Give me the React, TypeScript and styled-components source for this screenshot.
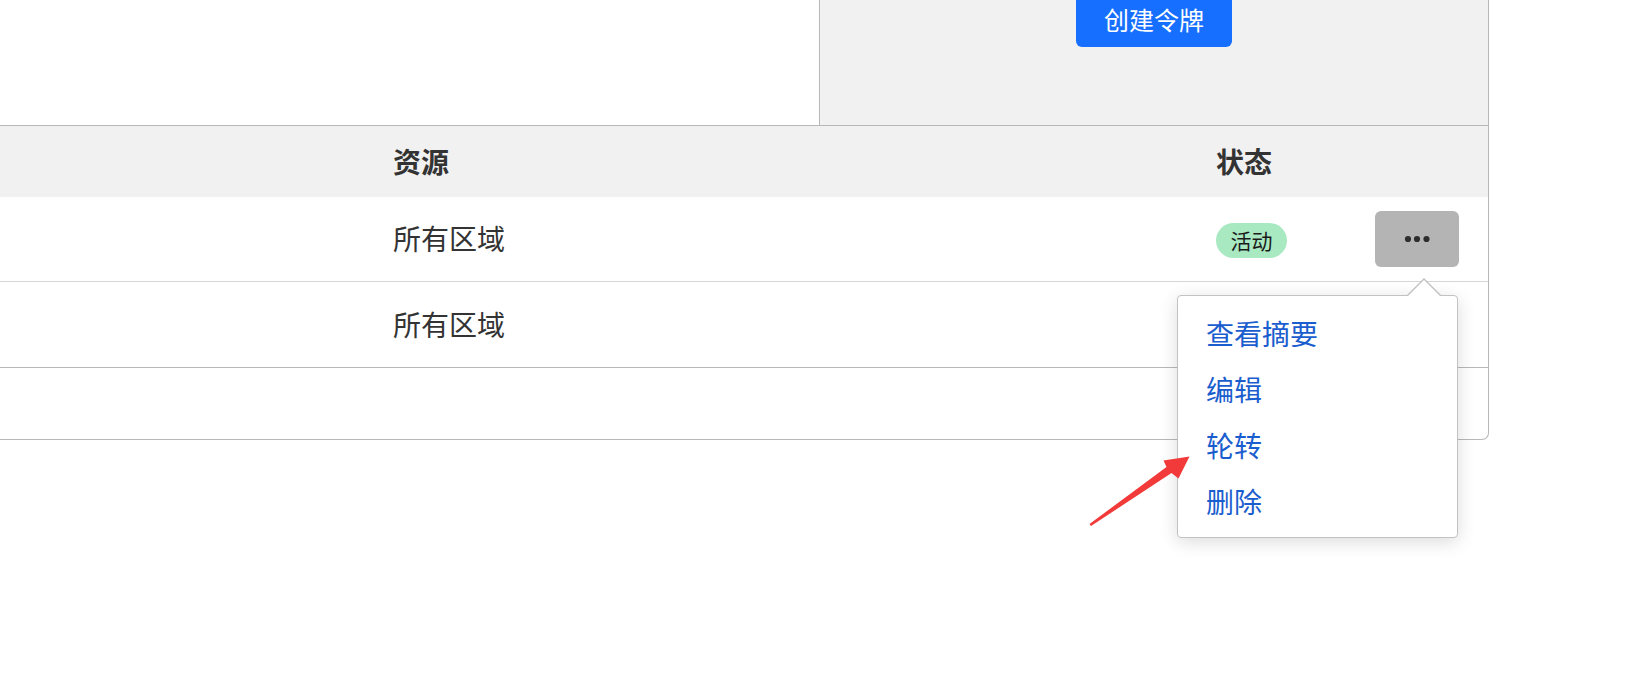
import * as React from 'react'
import styled, { createGlobalStyle } from 'styled-components'

const COLOR = {
  TEXT: '#333333',
  LINE: '#b8b8b8',
  LIGHT_LINE: '#d6d6d6',
  PANEL: '#f1f1f1',
  BLUE: '#166fff',
  LINK: '#1a5dce',
  BADGE: '#a9e9c2',
  MORE: '#b4b4b4',
}

const FONT = `'Noto Sans CJK SC', 'Noto Sans', sans-serif`

interface Token {
  id: number
  resource: string
  status?: string
}

const tokens: Token[] = [
  { id: 1, resource: '所有区域', status: '活动' },
  { id: 2, resource: '所有区域' },
]

const menuItems = ['查看摘要', '编辑', '轮转', '删除']

const App = () => {
  return (
    <Page>
      <GlobalStyle />
      <Card>
        <TopSection>
          <IntroPanel />
          <ActionPanel>
            <PrimaryButton>创建令牌</PrimaryButton>
          </ActionPanel>
        </TopSection>
        <HeaderRow>
          <Cell />
          <HeadCell>资源</HeadCell>
          <HeadCell>状态</HeadCell>
          <Cell />
        </HeaderRow>
        {tokens.map((token, index) => (
          <BodyRow key={token.id} isLast={index === tokens.length - 1}>
            <Cell />
            <Cell>{token.resource}</Cell>
            <Cell>{token.status && <Badge>{token.status}</Badge>}</Cell>
            <ActionCell>
              {index === 0 && (
                <>
                  <MoreButton>
                    <svg width="26" height="8" viewBox="0 0 26 8">
                      <circle cx="4" cy="4" r="3.1" fill="#2e2e2e" />
                      <circle cx="13" cy="4" r="3.1" fill="#2e2e2e" />
                      <circle cx="22.5" cy="4" r="3.1" fill="#2e2e2e" />
                    </svg>
                  </MoreButton>
                  <Menu>
                    {menuItems.map(item => (
                      <MenuItem key={item}>{item}</MenuItem>
                    ))}
                  </Menu>
                </>
              )}
            </ActionCell>
          </BodyRow>
        ))}
        <Footer />
      </Card>
      <Annotation width="1630" height="700" viewBox="0 0 1630 700">
        <polygon
          points="1089.5,524 1166.5,467 1163.5,460.5 1189.5,456.5 1178.5,478.5 1171.5,473 1091,526"
          fill="#f23a3a"
        />
      </Annotation>
    </Page>
  )
}

const GlobalStyle = createGlobalStyle`
  html, body {
    margin: 0;
    padding: 0;
    background: #ffffff;
  }
  body {
    font-family: ${FONT};
    color: ${COLOR.TEXT};
  }
`

const Page = styled.div`
  position: relative;
  width: 1630px;
  height: 700px;
  overflow: hidden;
`

const Card = styled.div`
  width: 1489px;
  box-sizing: border-box;
  border-right: 1px solid ${COLOR.LINE};
  border-bottom: 1px solid ${COLOR.LINE};
  border-bottom-right-radius: 7px;
`

const TopSection = styled.div`
  display: grid;
  grid-template-columns: 820px 1fr;
  height: 126px;
  box-sizing: border-box;
  border-bottom: 1px solid ${COLOR.LINE};
`

const IntroPanel = styled.div`
  background: #ffffff;
  border-right: 1px solid ${COLOR.LINE};
`

const ActionPanel = styled.div`
  background: ${COLOR.PANEL};
  display: flex;
  justify-content: center;
  align-items: flex-start;
`

const PrimaryButton = styled.button`
  margin-top: -8px;
  width: 156px;
  height: 55px;
  border: none;
  border-radius: 6px;
  background: ${COLOR.BLUE};
  color: #ffffff;
  font-family: ${FONT};
  font-size: 25px;
  line-height: 1;
  padding: 0;
`

const Row = styled.div`
  display: grid;
  grid-template-columns: 393px 823px 1fr auto;
  align-items: center;
  box-sizing: border-box;
`

const HeaderRow = styled(Row)`
  height: 71px;
  background: ${COLOR.PANEL};
`

const BodyRow = styled(Row)<{ isLast: boolean }>`
  height: ${props => (props.isLast ? 86 : 85)}px;
  border-bottom: 1px solid ${props => (props.isLast ? COLOR.LINE : COLOR.LIGHT_LINE)};
`

const Cell = styled.div`
  font-size: 28px;
  line-height: 1.2;
  color: ${COLOR.TEXT};
`

const HeadCell = styled(Cell)`
  font-weight: 700;
`

const ActionCell = styled.div`
  position: relative;
  padding-right: 29px;
  display: flex;
  justify-content: flex-end;
`

const Badge = styled.span`
  display: inline-flex;
  align-items: center;
  justify-content: center;
  width: 71px;
  height: 35px;
  border-radius: 18px;
  background: ${COLOR.BADGE};
  color: #1a1a1a;
  font-size: 21px;
  vertical-align: middle;
`

const MoreButton = styled.div`
  display: flex;
  align-items: center;
  justify-content: center;
  width: 84px;
  height: 56px;
  border-radius: 6px;
  background: ${COLOR.MORE};
`

const Menu = styled.div`
  position: absolute;
  top: 84px;
  right: 30px;
  width: 281px;
  box-sizing: border-box;
  padding: 9px 0 8px;
  background: #ffffff;
  border: 1px solid #c2c2c2;
  border-radius: 4px;
  box-shadow: 0 4px 18px rgba(0, 0, 0, 0.14);
  z-index: 2;

  &::before,
  &::after {
    content: '';
    position: absolute;
    right: 16px;
    width: 0;
    height: 0;
    border-left: 17px solid transparent;
    border-right: 17px solid transparent;
  }

  &::before {
    top: -18px;
    border-bottom: 17px solid #c2c2c2;
  }

  &::after {
    top: -16px;
    right: 17px;
    border-left-width: 16px;
    border-right-width: 16px;
    border-bottom: 16px solid #ffffff;
  }
`

const MenuItem = styled.div`
  height: 56px;
  display: flex;
  align-items: center;
  padding-left: 28px;
  font-size: 28px;
  color: ${COLOR.LINK};
`

const Footer = styled.div`
  height: 71px;
`

const Annotation = styled.svg`
  position: absolute;
  top: 0;
  left: 0;
  pointer-events: none;
  z-index: 3;
`

export default App
